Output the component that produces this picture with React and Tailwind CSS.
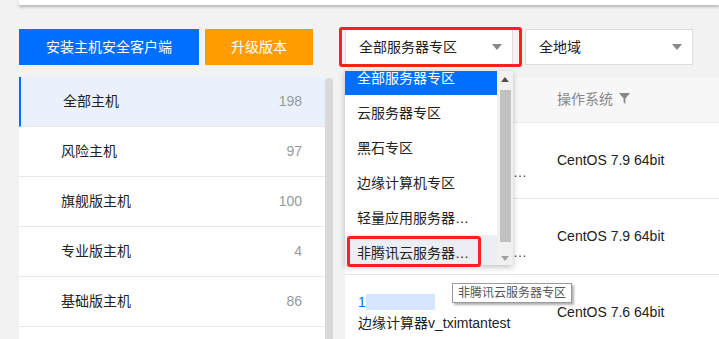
const font = { fontFamily: '"Liberation Sans", "Noto Sans CJK SC", sans-serif' };

const groups = [
  { name: "全部主机", count: 198, active: true },
  { name: "风险主机", count: 97 },
  { name: "旗舰版主机", count: 100 },
  { name: "专业版主机", count: 4 },
  { name: "基础版主机", count: 86 },
  { name: "", count: "" },
];

const zones = [
  "全部服务器专区",
  "云服务器专区",
  "黑石专区",
  "边缘计算机专区",
  "轻量应用服务器专区",
  "非腾讯云服务器专区",
];

function Caret() {
  return (
    <svg width="10" height="6" viewBox="0 0 10 6" className="shrink-0">
      <path d="M0 0h10L5 6z" fill="#888" />
    </svg>
  );
}

function Select({ label, width }) {
  return (
    <div className={`flex items-center justify-between h-[36px] bg-white border border-[#dcdcdc] pl-[13px] pr-[10px] text-[14px] text-[#222] ${width}`}>
      <span className="leading-none">{label}</span>
      <Caret />
    </div>
  );
}

function ZoneDropdown() {
  return (
    <div className="absolute left-[345px] top-[71px] w-[168px] h-[194px] bg-white shadow-[0_2px_6px_rgba(0,0,0,0.25)] flex">
      <div className="flex-1 overflow-hidden">
        <div className="-mt-[11px]">
          {zones.map((z, i) => (
            <div
              key={z}
              title={z}
              className={`h-[35px] flex items-center pl-[12px] pr-[16px] text-[14px] ${
                i === 0 ? "bg-[#006eff] text-white" : i === 5 ? "bg-[#ebeef3] text-[#222]" : "text-[#222]"
              }`}
            >
              <span className="truncate leading-none py-[2px]">{z}</span>
            </div>
          ))}
        </div>
      </div>
      <div className="w-[16px] bg-[#f1f1f1] flex flex-col items-center">
        <svg width="8" height="5" viewBox="0 0 8 5" className="mt-[6px]">
          <path d="M0 5h8L4 0z" fill="#505050" />
        </svg>
        <div className="w-[11px] flex-1 bg-[#c1c1c1] mt-[8px] mb-[14px]" />
        <svg width="8" height="5" viewBox="0 0 8 5" className="mb-[4px]">
          <path d="M0 0h8L4 5z" fill="#a3a3a3" />
        </svg>
      </div>
    </div>
  );
}

function Row({ children, os }) {
  return (
    <div className="h-[76px] border-b border-[#e5e5e5] flex items-center">
      <div className="w-[212px] pl-[13px] h-full relative">{children}</div>
      <div className="text-[14px] text-[#222]">{os}</div>
    </div>
  );
}

export default function App() {
  return (
    <div className="relative w-[719px] h-[339px] overflow-hidden bg-[#f2f2f2]" style={font}>
      <div className="ml-[19px] h-[5px] bg-white shadow-[0_2px_3px_rgba(0,0,0,0.25)]" />

      <div className="flex items-center pl-[19px] mt-[24px]">
        <button className="w-[180px] h-[36px] bg-[#006eff] text-white text-[14px]">安装主机安全客户端</button>
        <button className="ml-[6px] w-[108px] h-[36px] bg-[#ff9d00] text-white text-[14px]">升级版本</button>
        <Select label="全部服务器专区" width="ml-[32px] w-[168px]" />
        <Select label="全地域" width="ml-[12px] w-[168px]" />
      </div>

      <div className="flex mt-[12px] h-[262px]">
        <div className="ml-[19px] w-[306px] bg-white">
          {groups.map((g, i) => (
            <div
              key={i}
              className={`h-[50px] flex items-center justify-between pl-[42px] pr-[23px] border-b border-[#e8e8e8] text-[14px] ${
                g.active ? "bg-[#eaf1fc] border-l-2 border-l-[#006eff]" : ""
              }`}
            >
              <span className="text-[#222]">{g.name}</span>
              <span className="text-[#999]">{g.count}</span>
            </div>
          ))}
        </div>
        <div className="w-[8px] mt-[1px] bg-[#d9d9d9] rounded-t-[4px]" />

        <div className="ml-[12px] flex-1 bg-white">
          <div className="h-[46px] bg-[#f7f7f7] border-b border-[#eaeaea] flex items-center pl-[212px] text-[14px] text-[#888]">
            <span>操作系统</span>
            <svg width="11" height="11" viewBox="0 0 12 12" className="ml-[6px] mb-[2px]">
              <path d="M0 0h12L7 6v6L5 10V6z" fill="#888" />
            </svg>
          </div>
          <Row os="CentOS 7.9 64bit">
            <span className="absolute left-[168px] top-[42px] text-[14px] text-[#444] leading-none">…</span>
          </Row>
          <Row os="CentOS 7.9 64bit">
            <span className="absolute left-[168px] top-[46px] text-[14px] text-[#444] leading-none">…</span>
          </Row>
          <Row os="CentOS 7.6 64bit">
            <div className="flex flex-col justify-center h-full pt-[2px]">
              <div className="flex items-center h-[18px]">
                <span className="text-[14px] text-[#006eff]">1</span>
                <span className="w-[69px] h-[16px] bg-[#d8e5fe]" />
              </div>
              <div className="text-[14px] text-[#222] mt-[2px]">边缘计算器v_tximtantest</div>
            </div>
          </Row>
        </div>
      </div>

      <ZoneDropdown />

      <div className="absolute left-[452px] top-[283px] h-[20px] px-[5px] flex items-center bg-white border border-[#9a9a9a] shadow-[2px_2px_2px_rgba(0,0,0,0.3)] text-[12px] text-[#555]">
        非腾讯云服务器专区
      </div>

      <div className="absolute left-[339px] top-[27px] w-[183px] h-[40px] border-[3px] border-[#ff1f1f] rounded-[3px]" />
      <div className="absolute left-[347px] top-[236px] w-[134px] h-[31px] border-[3px] border-[#ff1f1f] rounded-[3px]" />
    </div>
  );
}
